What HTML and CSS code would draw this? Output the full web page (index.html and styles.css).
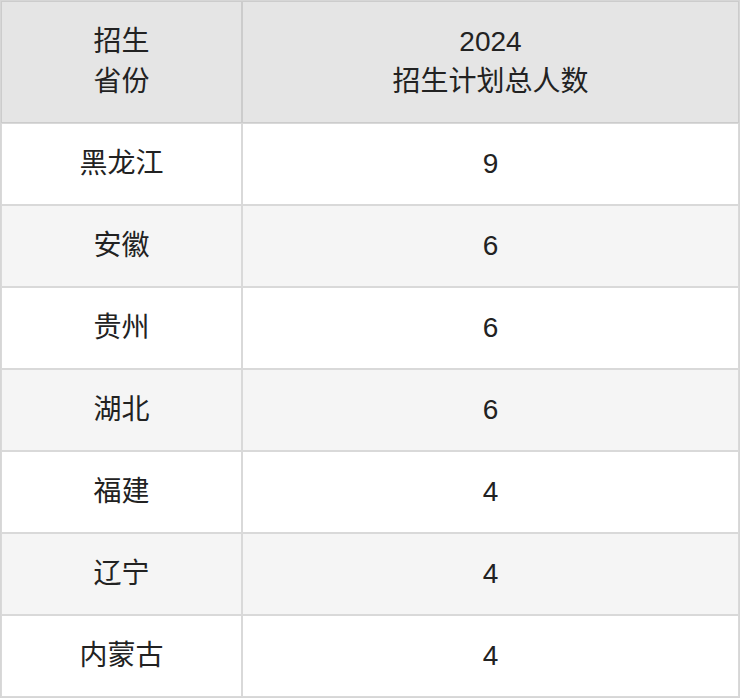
FILE: index.html
```html
<!DOCTYPE html>
<html lang="zh">
<head>
<meta charset="utf-8">
<link rel="stylesheet" href="styles.css">
</head>
<body>
<div class="table">
  <div class="cell head">招生<br>省份</div>
  <div class="cell head">2024<br>招生计划总人数</div>
  <div class="cell">黑龙江</div><div class="cell">9</div>
  <div class="cell alt">安徽</div><div class="cell alt">6</div>
  <div class="cell">贵州</div><div class="cell">6</div>
  <div class="cell alt">湖北</div><div class="cell alt">6</div>
  <div class="cell">福建</div><div class="cell">4</div>
  <div class="cell alt">辽宁</div><div class="cell alt">4</div>
  <div class="cell">内蒙古</div><div class="cell">4</div>
</div>
</body>
</html>
```
FILE: styles.css
```css
html, body {
  margin: 0;
  padding: 0;
  background: #fff;
}
.table {
  width: 740px;
  height: 698px;
  box-sizing: border-box;
  border: 1px solid #d6d6d6;
  display: grid;
  grid-template-columns: 241px 497px;
  grid-template-rows: 122px repeat(7, 82px);
  font-family: "Liberation Sans", "Noto Sans CJK SC", sans-serif;
  font-size: 28px;
  color: #222;
}
.cell {
  box-sizing: border-box;
  border: 1px solid #d9d9d9;
  display: flex;
  align-items: center;
  justify-content: center;
  text-align: center;
  line-height: 40px;
  background: #fff;
}
.cell.head {
  background: #e5e5e5;
  border-color: #cccccc;
}
.cell.alt {
  background: #f5f5f5;
}
```
